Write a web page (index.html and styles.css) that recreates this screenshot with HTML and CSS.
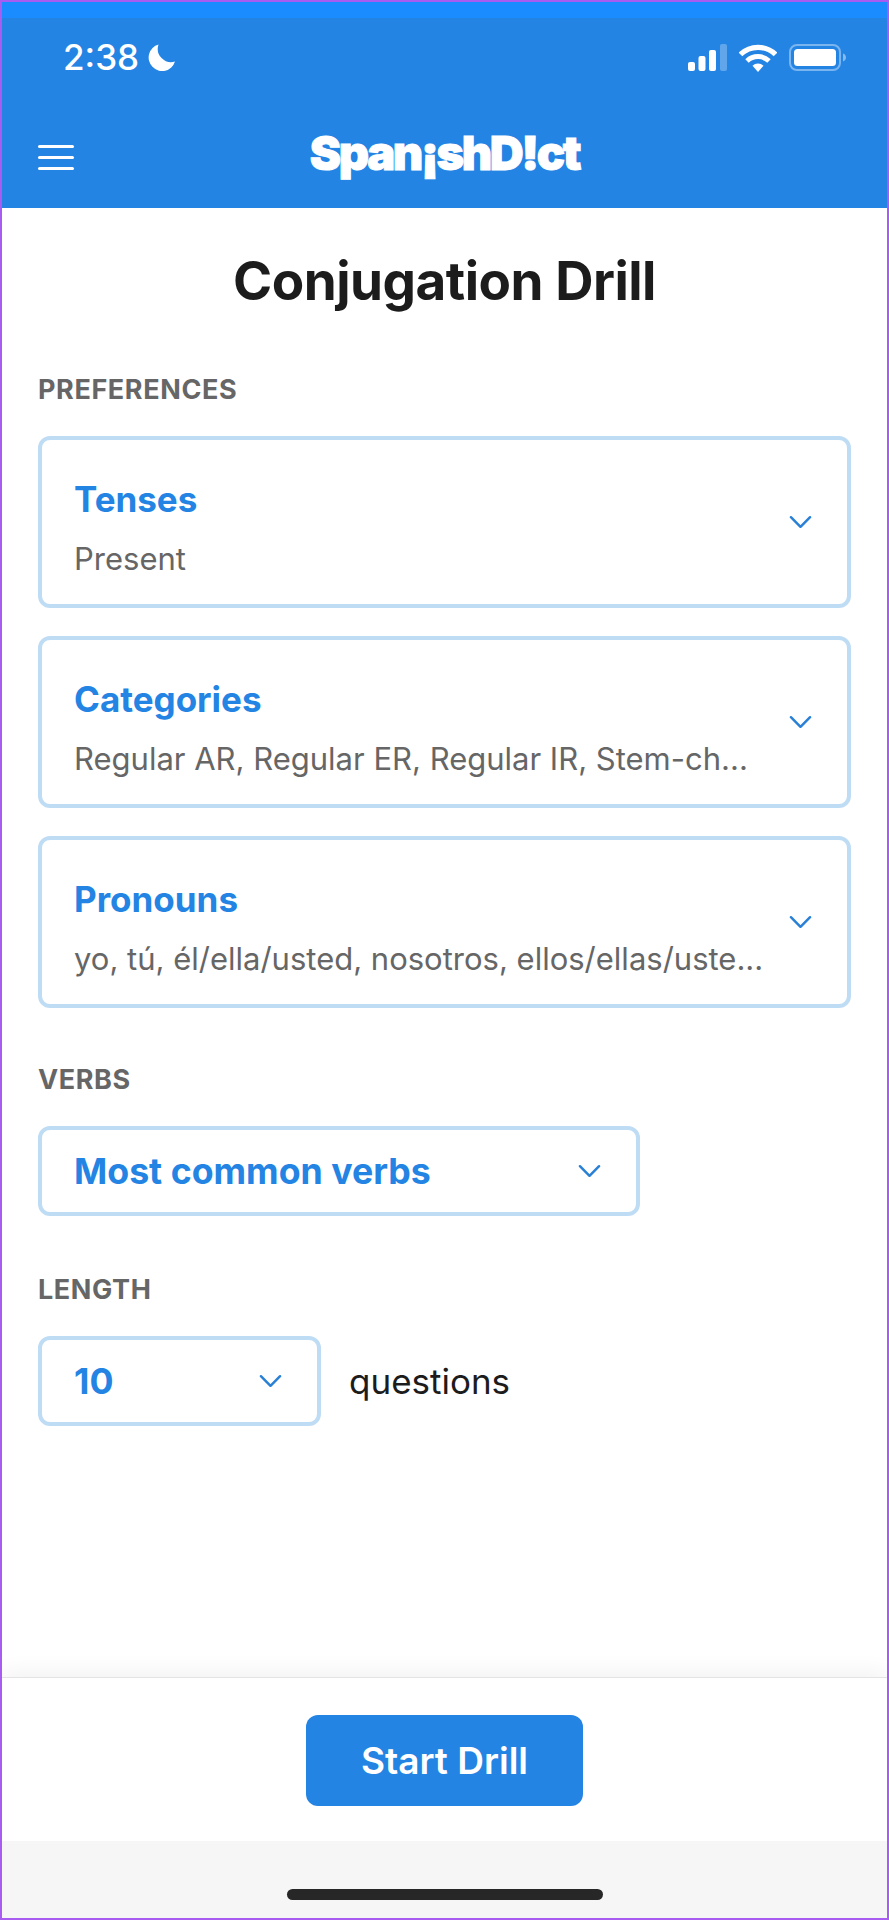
FILE: index.html
```html
<!DOCTYPE html>
<html lang="en">
<head>
    <title>Conjugation Drill - SpanishDict</title>
    <meta charset="UTF-8">
    <meta name="viewport" content="width=device-width, initial-scale=1.0">
    <link rel="stylesheet" href="styles.css">
</head>
<body>
    <svg class="icon-defs" width="0" height="0">
        <symbol id="chevron" viewBox="0 0 24 14">
            <path d="M2 2l10 10L22 2" fill="none" stroke="#2a80d4" stroke-width="2.6" stroke-linecap="round" stroke-linejoin="round"/>
        </symbol>
    </svg>

    <header class="top-header">
        <div class="status-bar">
            <div class="status-left">
                <span class="status-time">2:38</span>
                <svg class="moon-icon" viewBox="0 0 27 27"><path d="M10.5 0.5A13.4 13.4 0 0 0 27 17.6 13.5 13.5 0 1 1 10.5 0.5z" fill="#fff"/></svg>
            </div>
            <div class="status-right">
                <svg class="signal-icon" viewBox="0 0 39 27">
                    <rect x="0" y="18" width="7" height="9" rx="2" fill="#fff"/>
                    <rect x="10.500" y="12" width="7" height="15" rx="2" fill="#fff"/>
                    <rect x="21" y="6" width="7" height="21" rx="2" fill="#fff"/>
                    <rect x="32" y="0" width="7" height="27" rx="2" fill="#fff" fill-opacity="0.28"/>
                </svg>
                <svg class="wifi-icon" viewBox="0 0 38 28">
                    <path d="M1.500 10.500a25 25 0 0 1 35 0" fill="none" stroke="#fff" stroke-width="5.200"/>
                    <path d="M8 17a16 16 0 0 1 22 0" fill="none" stroke="#fff" stroke-width="5"/>
                    <path d="M13.500 21.800a8 8 0 0 1 11 0L19 28z" fill="#fff"/>
                </svg>
                <svg class="battery-icon" viewBox="0 0 57 27">
                    <rect x="1" y="1" width="50" height="25" rx="7" fill="none" stroke="#fff" stroke-opacity="0.4" stroke-width="2"/>
                    <rect x="5" y="5" width="42" height="17" rx="3.500" fill="#fff"/>
                    <path d="M54 9.500c1.800 0.600 3 2.200 3 4s-1.200 3.400-3 4z" fill="#fff" fill-opacity="0.45"/>
                </svg>
            </div>
        </div>
        <div class="nav-bar">
            <div class="menu-btn"><span></span><span></span><span></span></div>
            <div class="logo">Span¡shD!ct</div>
        </div>
    </header>

    <main class="main-content">
        <h1 class="page-title">Conjugation Drill</h1>

        <div class="section-label">PREFERENCES</div>
        <div class="pref-list">
            <div class="pref-card">
                <div class="pref-text">
                    <div class="pref-title">Tenses</div>
                    <div class="pref-value">Present</div>
                </div>
                <svg class="chevron"><use href="#chevron"/></svg>
            </div>
            <div class="pref-card">
                <div class="pref-text">
                    <div class="pref-title">Categories</div>
                    <div class="pref-value">Regular AR, Regular ER, Regular IR, Stem-ch...</div>
                </div>
                <svg class="chevron"><use href="#chevron"/></svg>
            </div>
            <div class="pref-card">
                <div class="pref-text">
                    <div class="pref-title">Pronouns</div>
                    <div class="pref-value">yo, tú, él/ella/usted, nosotros, ellos/ellas/uste...</div>
                </div>
                <svg class="chevron"><use href="#chevron"/></svg>
            </div>
        </div>

        <div class="section-label verbs-label">VERBS</div>
        <div class="select-box verbs-select">
            <span>Most common verbs</span>
            <svg class="chevron"><use href="#chevron"/></svg>
        </div>

        <div class="section-label length-label">LENGTH</div>
        <div class="length-row">
            <div class="select-box length-select">
                <span>10</span>
                <svg class="chevron"><use href="#chevron"/></svg>
            </div>
            <span class="length-unit">questions</span>
        </div>
    </main>

    <div class="footer">
        <button class="start-button">Start Drill</button>
    </div>

    <div class="home-area">
        <div class="home-bar"></div>
    </div>
</body>
</html>
```

FILE: styles.css
```css
* {
    margin: 0;
    padding: 0;
    box-sizing: border-box;
    font-family: Inter, "Liberation Sans", sans-serif;
}

body {
    width: 889px;
    height: 1920px;
    background: white;
    border: 2px solid #a95cf0;
    display: flex;
    flex-direction: column;
    overflow: hidden;
}

.icon-defs {
    position: absolute;
}

.top-header {
    height: 206px;
    background: #2484e4;
    border-top: 16px solid #1a8cff;
    flex-shrink: 0;
}

.status-bar {
    height: 70px;
    padding: 26px 41px 0 61px;
    display: flex;
    justify-content: space-between;
    align-items: flex-start;
    color: white;
}

.status-left {
    display: flex;
    align-items: center;
    gap: 9px;
}

.status-time {
    font-size: 35px;
    font-weight: 500;
    line-height: 27px;
}

.moon-icon {
    width: 27px;
    height: 27px;
}

.status-right {
    display: flex;
    align-items: flex-start;
    gap: 12px;
}

.signal-icon {
    width: 39px;
    height: 27px;
}

.wifi-icon {
    width: 38px;
    height: 28px;
}

.battery-icon {
    width: 57px;
    height: 27px;
}

.nav-bar {
    height: 120px;
    padding-top: 8px;
    display: flex;
    align-items: center;
    justify-content: center;
    position: relative;
}

.menu-btn {
    position: absolute;
    left: 36px;
    top: 57px;
    width: 36px;
    display: flex;
    flex-direction: column;
    gap: 8px;
}

.menu-btn span {
    height: 3px;
    background: white;
    border-radius: 2px;
}

.logo {
    color: white;
    font-size: 47px;
    font-weight: 900;
    letter-spacing: -2.4px;
    -webkit-text-stroke: 1px white;
}

.main-content {
    flex: 1;
    padding: 0 36px;
}

.page-title {
    margin-top: 40px;
    margin-bottom: 60px;
    color: #1c1c1c;
    font-size: 53px;
    font-weight: 700;
    line-height: 66px;
    text-align: center;
    letter-spacing: -0.5px;
}

.section-label {
    color: #666;
    font-size: 27px;
    font-weight: 700;
    line-height: 32px;
    letter-spacing: 0.6px;
}

.pref-list {
    margin-top: 30px;
    display: flex;
    flex-direction: column;
    gap: 28px;
}

.pref-card {
    height: 172px;
    border: 4px solid #bfdcf5;
    border-radius: 12px;
    padding: 0 35px 0 32px;
    display: flex;
    align-items: center;
    gap: 30px;
}

.pref-text {
    flex: 1;
    min-width: 0;
    padding-top: 12px;
}

.pref-title {
    color: #2484e4;
    font-size: 35px;
    font-weight: 700;
    line-height: 44px;
}

.pref-value {
    margin-top: 18px;
    color: #666;
    font-size: 31px;
    line-height: 40px;
    white-space: nowrap;
}

.chevron {
    width: 23px;
    height: 14px;
    flex-shrink: 0;
}

.verbs-label {
    margin-top: 56px;
}

.length-label {
    margin-top: 58px;
}

.select-box {
    height: 90px;
    border: 4px solid #bfdcf5;
    border-radius: 12px;
    padding: 0 35px 0 32px;
    display: flex;
    align-items: center;
    justify-content: space-between;
    color: #2484e4;
    font-size: 35.7px;
    font-weight: 700;
}

.verbs-select {
    width: 602px;
    margin-top: 30px;
}

.length-row {
    margin-top: 30px;
    display: flex;
    align-items: center;
    gap: 28px;
}

.length-select {
    width: 283px;
}

.length-unit {
    color: #1c1c1c;
    font-size: 35px;
}

.footer {
    height: 164px;
    flex-shrink: 0;
    border-top: 1px solid #e4e4e4;
    box-shadow: 0 -6px 20px rgba(0, 0, 0, 0.05);
    background: white;
    padding-top: 2px;
    display: flex;
    align-items: center;
    justify-content: center;
}

.start-button {
    width: 277px;
    height: 91px;
    background: #2484e4;
    color: white;
    border: none;
    border-radius: 12px;
    font-size: 37px;
    font-weight: 600;
}

.home-area {
    height: 77px;
    flex-shrink: 0;
    background: #f6f6f6;
    display: flex;
    justify-content: center;
    padding-top: 48px;
}

.home-bar {
    width: 316px;
    height: 11px;
    background: #272727;
    border-radius: 6px;
}
```
